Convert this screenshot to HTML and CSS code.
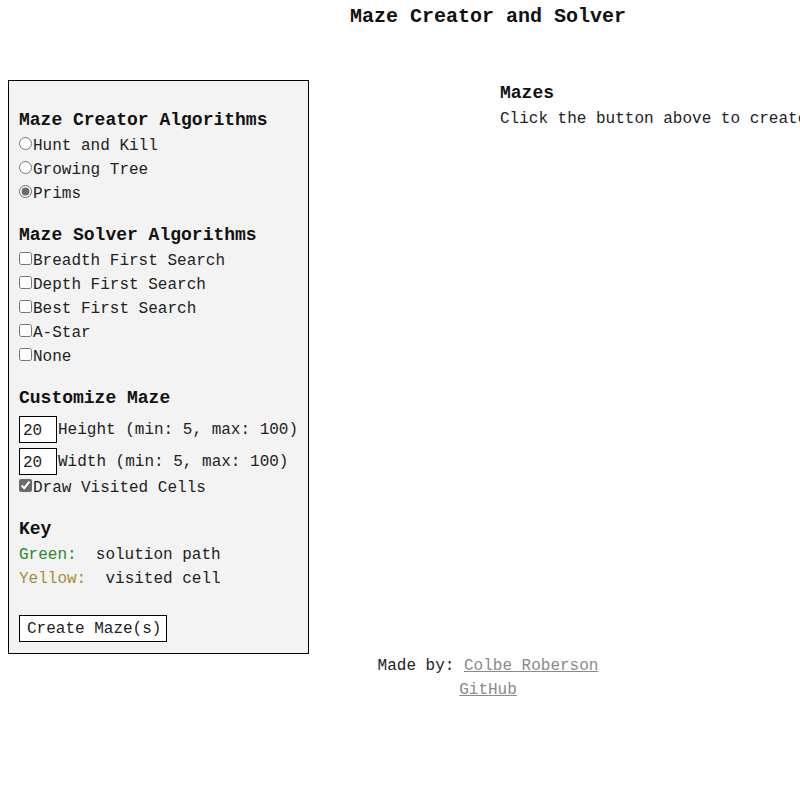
FILE: index.html
```html
<!DOCTYPE html>
<html lang="en">
<head>
<meta charset="utf-8">
<title>Maze Creator and Solver</title>
<link rel="stylesheet" href="styles.css">
</head>
<body>
<div class="page">
  <h1 class="title">Maze Creator and Solver</h1>
  <div class="main">
    <form class="panel">
      <h3 class="heading first">Maze Creator Algorithms</h3>
      <label class="option"><input type="radio" name="creator">Hunt and Kill</label>
      <label class="option"><input type="radio" name="creator">Growing Tree</label>
      <label class="option"><input type="radio" name="creator" checked>Prims</label>

      <h3 class="heading">Maze Solver Algorithms</h3>
      <label class="option"><input type="checkbox">Breadth First Search</label>
      <label class="option"><input type="checkbox">Depth First Search</label>
      <label class="option"><input type="checkbox">Best First Search</label>
      <label class="option"><input type="checkbox">A-Star</label>
      <label class="option"><input type="checkbox">None</label>

      <h3 class="heading">Customize Maze</h3>
      <label class="size-row"><input class="num" type="text" value="20">Height (min: 5, max: 100)</label>
      <label class="size-row second"><input class="num" type="text" value="20">Width (min: 5, max: 100)</label>
      <label class="option"><input type="checkbox" checked>Draw Visited Cells</label>

      <h3 class="heading key-heading">Key</h3>
      <div class="key-line"><span class="green">Green:</span>  solution path</div>
      <div class="key-line"><span class="yellow">Yellow:</span>  visited cell</div>

      <button type="button" class="create">Create Maze(s)</button>
    </form>
    <section class="mazes">
      <h3 class="mazes-title">Mazes</h3>
      <p class="hint">Click the button above to create maze(s).</p>
    </section>
  </div>
  <footer class="footer">
    <div class="footer-line">Made by: <a href="#">Colbe Roberson</a></div>
    <div class="footer-line"><a href="#">GitHub</a></div>
  </footer>
</div>
</body>
</html>
```

FILE: styles.css
```css
html {
  overflow-x: hidden;
}
body {
  margin: 0;
  background: #ffffff;
  color: #222222;
  font-family: "Liberation Mono", "Courier New", monospace;
  font-size: 16px;
}
.page {
  width: 960px;
  padding: 5px 8px 0 8px;
}
.title {
  margin: 0;
  font-size: 20px;
  line-height: 23px;
  font-weight: bold;
  text-align: center;
  color: #111111;
}
.main {
  display: flex;
  align-items: flex-start;
  gap: 191px;
  margin-top: 52px;
}
.panel {
  box-sizing: border-box;
  width: 301px;
  flex: none;
  background: #f3f3f3;
  border: 1px solid #000000;
  padding: 0 10px 11px 10px;
  display: flex;
  flex-direction: column;
  align-items: flex-start;
  white-space: nowrap;
}
.heading {
  margin: 19px 0 4px 0;
  font-size: 18px;
  line-height: 20px;
  font-weight: bold;
  color: #111111;
}
.heading.first {
  margin-top: 29px;
}
.heading.key-heading {
  margin-top: 19px;
  margin-bottom: 4px;
}
.option {
  display: flex;
  align-items: flex-start;
  height: 24px;
  line-height: 24px;
}
.option input {
  margin: 3px 1px 0 0;
  width: 13px;
  height: 13px;
  accent-color: #6b6b6b;
}
.size-row {
  display: flex;
  align-items: center;
  height: 27px;
  margin-top: 4px;
}
.size-row.second {
  margin-top: 5px;
  margin-bottom: 1px;
}
.num {
  box-sizing: border-box;
  width: 38px;
  height: 27px;
  margin: 0 1px 0 0;
  padding: 2px 3px 0 3px;
  border: 1px solid #000000;
  background: #ffffff;
  font-family: "Liberation Mono", "Courier New", monospace;
  font-size: 16px;
  color: #222222;
  outline: none;
}
.key-line {
  height: 24px;
  line-height: 24px;
  white-space: pre;
}
.green {
  color: #2b8a2b;
}
.yellow {
  color: #a88c3c;
}
.create {
  box-sizing: border-box;
  margin-top: 24px;
  width: 148px;
  height: 27px;
  padding: 0 0 0 7px;
  text-align: left;
  background: #ffffff;
  border: 1px solid #000000;
  border-radius: 0;
  font-family: "Liberation Mono", "Courier New", monospace;
  font-size: 16px;
  color: #222222;
}
.mazes {
  padding-top: 3px;
  white-space: nowrap;
}
.mazes-title {
  margin: 0;
  font-size: 18px;
  line-height: 20px;
  font-weight: bold;
  color: #111111;
}
.hint {
  margin: 4px 0 0 0;
  line-height: 24px;
}
.footer {
  text-align: center;
  margin-top: 0;
}
.footer-line {
  line-height: 24px;
  height: 24px;
}
.footer a {
  color: #8a8a8a;
}
```
